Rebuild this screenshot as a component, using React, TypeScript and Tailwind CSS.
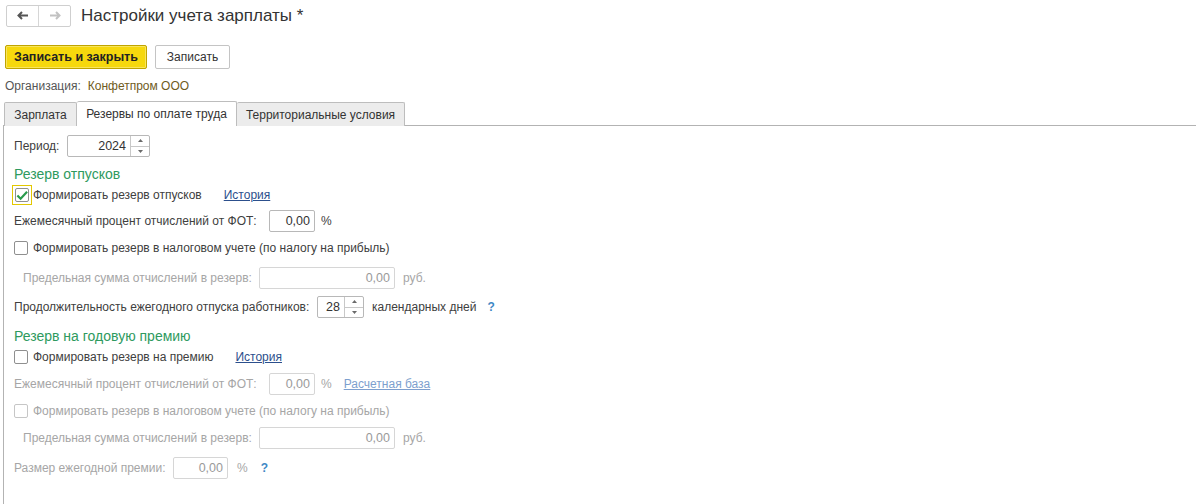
import React from 'react';

const font = { fontFamily: '"Liberation Sans", Arial, sans-serif' };

// small up/down stepper glued to the right side of a number field
const Spinner: React.FC = () => (
  <div className="flex h-full w-[19px] flex-col border-l border-[#c8c8c8]">
    <div className="flex flex-1 items-center justify-center border-b border-[#c8c8c8]">
      <svg width="5" height="3" viewBox="0 0 5 3"><path d="M2.5 0 L5 3 L0 3 Z" fill="#6a6a6a" /></svg>
    </div>
    <div className="flex flex-1 items-center justify-center">
      <svg width="5" height="3" viewBox="0 0 5 3"><path d="M0 0 L5 0 L2.5 3 Z" fill="#6a6a6a" /></svg>
    </div>
  </div>
);

const Field: React.FC<{ value: string; width: string; disabled?: boolean; spin?: boolean }> = ({ value, width, disabled, spin }) => (
  <div className={`flex h-[22px] ${width} shrink-0 items-stretch rounded-[2px] border ${disabled ? 'border-[#d6d6d6]' : 'border-[#b8b8b8]'} bg-white`}>
    <div className={`flex flex-1 items-center justify-end pr-[4px] text-[12.5px] ${disabled ? 'text-[#9a9a9a]' : 'text-[#333]'}`}>{value}</div>
    {spin && <Spinner />}
  </div>
);

const Box: React.FC<{ checked?: boolean; focused?: boolean; disabled?: boolean }> = ({ checked, focused, disabled }) => (
  <div className={`flex h-[20px] w-[20px] shrink-0 items-center justify-center ${focused ? 'border border-[#e3c800]' : ''}`}>
    <div className={`flex h-[14px] w-[14px] items-center justify-center rounded-[2px] border ${disabled ? 'border-[#c6c6c6]' : 'border-[#8f8f8f]'} bg-white`}>
      {checked && (
        <svg width="13" height="11" viewBox="0 0 13 11"><path d="M1.5 5.5 L5 9 L12 1.5" stroke="#2a9a4c" strokeWidth="2.4" fill="none" /></svg>
      )}
    </div>
  </div>
);

const Help: React.FC = () => <span className="text-[12px] font-bold text-[#3f88c5]">?</span>;

export default function App() {
  return (
    <div className="h-[504px] w-[1196px] overflow-hidden whitespace-nowrap bg-white text-[12px] text-[#404040]" style={font}>
      {/* header */}
      <div className="flex h-[30px] items-center pl-[6px] pt-[1px]">
        <div className="flex h-[22px] w-[65px] rounded-[2px] border border-[#cfcfcf]">
          <div className="flex w-[32px] items-center justify-center border-r border-[#d6d6d6]">
            <svg width="12" height="9" viewBox="0 0 12 9"><path d="M11 4.5 H2 M5 1 L1.5 4.5 L5 8" stroke="#555" strokeWidth="2" fill="none" /></svg>
          </div>
          <div className="flex flex-1 items-center justify-center">
            <svg width="12" height="9" viewBox="0 0 12 9"><path d="M1 4.5 H10 M7 1 L10.5 4.5 L7 8" stroke="#c2c2c2" strokeWidth="2" fill="none" /></svg>
          </div>
        </div>
        <div className="ml-[10px] text-[17px] text-[#333]">Настройки учета зарплаты *</div>
      </div>

      {/* command bar */}
      <div className="mt-[15px] flex items-center pl-[5px]">
        <button className="h-[24px] w-[142px] rounded-[2px] border border-[#bfa400] bg-[#f6d80d] text-[#222] shadow-[inset_0_0_0_1px_#f9e45c]">
          <span className="text-[12.5px] font-bold">Записать и закрыть</span>
        </button>
        <button className="ml-[8px] h-[24px] w-[75px] rounded-[2px] border border-[#c4c4c4] bg-white text-[12px] text-[#333]">Записать</button>
      </div>

      {/* organisation */}
      <div className="mt-[7px] flex h-[20px] items-center pl-[5px]">
        <span className="text-[#555]">Организация:</span>
        <span className="ml-[7px] text-[#6f5b1d]">Конфетпром ООО</span>
      </div>

      {/* tabs */}
      <div className="mt-[5px] flex h-[25px] items-end pl-[4px]">
        <div className="flex h-[24px] w-[73px] items-center justify-center rounded-t-[2px] border border-b-0 border-[#bdbdbd] bg-[#ececec] text-[#333]">Зарплата</div>
        <div className="relative z-10 flex h-[25px] w-[160px] items-center justify-center rounded-t-[2px] border border-b-0 border-l-0 border-[#bdbdbd] bg-white text-[#333]">Резервы по оплате труда</div>
        <div className="flex h-[24px] w-[168px] items-center justify-center rounded-t-[2px] border border-b-0 border-l-0 border-[#bdbdbd] bg-[#ececec] text-[#333]">Территориальные условия</div>
      </div>

      {/* page */}
      <div className="-mt-px ml-[3px] h-[400px] border-l border-t border-[#b3b3b3] pl-[10px]">
        <div className="mt-[9px] flex h-[22px] items-center">
          <span className="w-[53px]">Период:</span>
          <Field value="2024" width="w-[83px]" spin />
        </div>

        <div className="mt-[7px] flex h-[20px] items-center text-[14px] text-[#2e9a5e]">Резерв отпусков</div>

        <div className="-ml-[2px] mt-px flex h-[20px] items-center">
          <Box checked focused />
          <span className="ml-[1px]">Формировать резерв отпусков</span>
          <span className="ml-[22px] text-[#2c4f8c] underline">История</span>
        </div>

        <div className="mt-[5px] flex h-[22px] items-center">
          <span className="w-[255px]">Ежемесячный процент отчислений от ФОТ:</span>
          <Field value="0,00" width="w-[46px]" />
          <span className="ml-[6px]">%</span>
        </div>

        <div className="-ml-[3px] mt-[6px] flex h-[20px] items-center">
          <Box />
          <span className="ml-[2px]">Формировать резерв в налоговом учете (по налогу на прибыль)</span>
        </div>

        <div className="mt-[9px] flex h-[22px] items-center pl-[9px] text-[#a6a6a6]">
          <span className="w-[236px]">Предельная сумма отчислений в резерв:</span>
          <Field value="0,00" width="w-[136px]" disabled />
          <span className="ml-[8px]">руб.</span>
        </div>

        <div className="mt-[7px] flex h-[22px] items-center">
          <span className="w-[303px]">Продолжительность ежегодного отпуска работников:</span>
          <Field value="28" width="w-[47px]" spin />
          <span className="ml-[8px]">календарных дней</span>
          <span className="ml-[11px]"><Help /></span>
        </div>

        <div className="mt-[8px] flex h-[20px] items-center text-[14px] text-[#2e9a5e]">Резерв на годовую премию</div>

        <div className="-ml-[3px] mt-px flex h-[20px] items-center">
          <Box />
          <span className="ml-[2px]">Формировать резерв на премию</span>
          <span className="ml-[22px] text-[#2c4f8c] underline">История</span>
        </div>

        <div className="mt-[6px] flex h-[22px] items-center text-[#a6a6a6]">
          <span className="w-[255px]">Ежемесячный процент отчислений от ФОТ:</span>
          <Field value="0,00" width="w-[46px]" disabled />
          <span className="ml-[6px]">%</span>
          <span className="ml-[12px] text-[#7d9fce] underline">Расчетная база</span>
        </div>

        <div className="-ml-[3px] mt-[6px] flex h-[20px] items-center text-[#a6a6a6]">
          <Box disabled />
          <span className="ml-[2px]">Формировать резерв в налоговом учете (по налогу на прибыль)</span>
        </div>

        <div className="mt-[6px] flex h-[22px] items-center pl-[9px] text-[#a6a6a6]">
          <span className="w-[236px]">Предельная сумма отчислений в резерв:</span>
          <Field value="0,00" width="w-[136px]" disabled />
          <span className="ml-[8px]">руб.</span>
        </div>

        <div className="mt-[8px] flex h-[22px] items-center text-[#a6a6a6]">
          <span className="w-[159px]">Размер ежегодной премии:</span>
          <Field value="0,00" width="w-[55px]" disabled />
          <span className="ml-[9px]">%</span>
          <span className="ml-[13px]"><Help /></span>
        </div>
      </div>
    </div>
  );
}
